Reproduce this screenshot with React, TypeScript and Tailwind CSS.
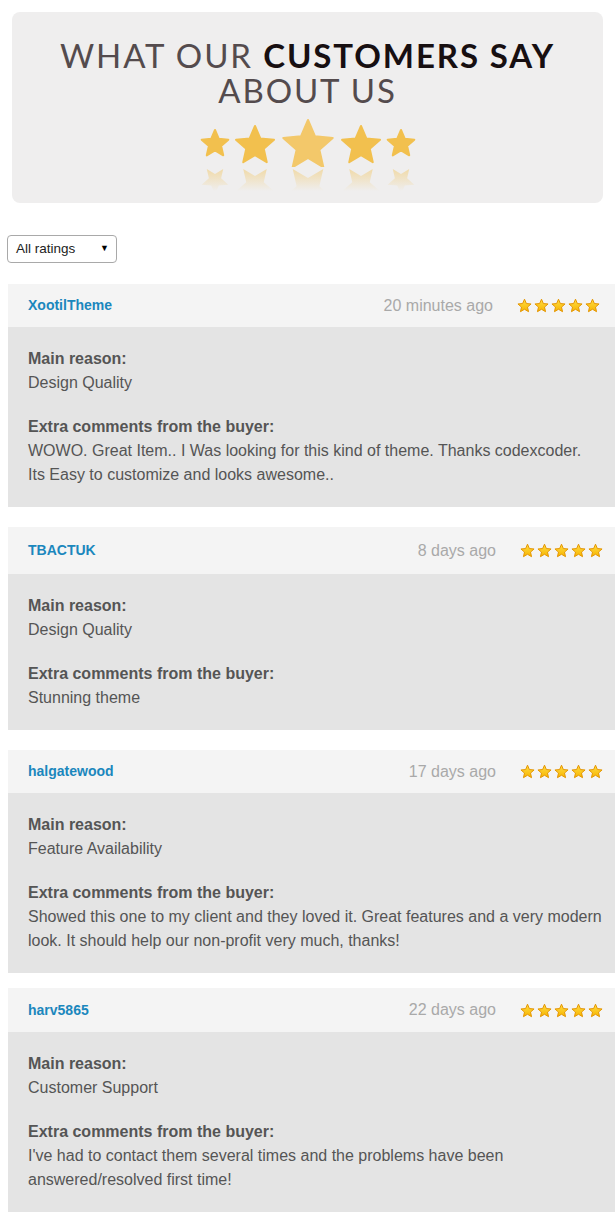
import React from "react";

type Review = {
  name: string;
  time: string;
  reason: string;
  comment: string[];
  head: string;
  top: string;
  right: string;
};

const reviews: Review[] = [
  {
    name: "XootilTheme",
    time: "20 minutes ago",
    reason: "Design Quality",
    comment: [
      "WOWO. Great Item.. I Was looking for this kind of theme. Thanks codexcoder.",
      "Its Easy to customize and looks awesome..",
    ],
    head: "h-[43px]",
    top: "mt-[21px]",
    right: "pr-[15px]",
  },
  {
    name: "TBACTUK",
    time: "8 days ago",
    reason: "Design Quality",
    comment: ["Stunning theme"],
    head: "h-[47px]",
    top: "mt-[20px]",
    right: "pr-[12px]",
  },
  {
    name: "halgatewood",
    time: "17 days ago",
    reason: "Feature Availability",
    comment: [
      "Showed this one to my client and they loved it. Great features and a very modern",
      "look. It should help our non-profit very much, thanks!",
    ],
    head: "h-[43px]",
    top: "mt-[20px]",
    right: "pr-[12px]",
  },
  {
    name: "harv5865",
    time: "22 days ago",
    reason: "Customer Support",
    comment: [
      "I've had to contact them several times and the problems have been",
      "answered/resolved first time!",
    ],
    head: "h-[44px]",
    top: "mt-[15px]",
    right: "pr-[12px]",
  },
];

// 5-point star as a polygon point list
function starPoints(cx: number, cy: number, R: number, flip = false) {
  const r = R * 0.46;
  const pts: string[] = [];
  for (let i = 0; i < 10; i++) {
    const a = ((flip ? 90 : -90) + i * 36) * (Math.PI / 180);
    const rad = i % 2 === 0 ? R : r;
    pts.push(`${(cx + rad * Math.cos(a)).toFixed(2)},${(cy + rad * Math.sin(a)).toFixed(2)}`);
  }
  return pts.join(" ");
}

const bigStars = [
  { x: 27, y: 29, R: 14, c: "#f2c04e" },
  { x: 67, y: 31, R: 20, c: "#f2c04e" },
  { x: 120, y: 31, R: 26, c: "#f3c86a" },
  { x: 173, y: 31, R: 20, c: "#f2c04e" },
  { x: 213, y: 29, R: 14, c: "#f2c04e" },
];

function BannerStars() {
  return (
    <svg width="240" height="80" viewBox="0 0 240 80" className="mx-auto mt-[7px]">
      <defs>
        <linearGradient id="refl" x1="0" y1="53" x2="0" y2="76" gradientUnits="userSpaceOnUse">
          <stop offset="0" stopColor="#f2c04e" stopOpacity="0.45" />
          <stop offset="1" stopColor="#f2c04e" stopOpacity="0" />
        </linearGradient>
      </defs>
      {bigStars.map((s, i) => (
        <g key={i}>
          <polygon
            points={starPoints(s.x, 53 + s.R * 0.809 + 1, s.R, true)}
            fill="url(#refl)"
          />
          <polygon
            points={starPoints(s.x, s.y, s.R)}
            fill={s.c}
            stroke={s.c}
            strokeWidth="2"
            strokeLinejoin="round"
          />
        </g>
      ))}
      <rect x="0" y="52" width="240" height="1.5" fill="#efeeee" />
    </svg>
  );
}

function SmallStar() {
  return (
    <svg width="15" height="15" viewBox="0 0 20 20">
      <defs>
        <linearGradient id="sm" x1="0" y1="0" x2="0" y2="1">
          <stop offset="0" stopColor="#ffdd44" />
          <stop offset="1" stopColor="#f7b500" />
        </linearGradient>
      </defs>
      <polygon
        points={starPoints(10, 10.8, 9.2)}
        fill="url(#sm)"
        stroke="#e39400"
        strokeWidth="1.3"
        strokeLinejoin="round"
      />
    </svg>
  );
}

function ReviewCard({ r }: { r: Review }) {
  return (
    <div className={`${r.top} ml-[8px]`}>
      <div className={`${r.head} ${r.right} flex items-center bg-[#f4f4f4] pl-[20px]`}>
        <span className="text-[14px] font-bold text-[#1b87bd]">{r.name}</span>
        <span className="ml-auto text-[16px] text-[#a9a9a9]">{r.time}</span>
        <div className="ml-[24px] flex gap-[2px]">
          {[0, 1, 2, 3, 4].map((i) => (
            <SmallStar key={i} />
          ))}
        </div>
      </div>
      <div className="bg-[#e4e4e4] pl-[20px] pr-[6px] pt-[20px] pb-[20px] text-[16px] leading-[24px] text-[#555]">
        <div className="font-bold">Main reason:</div>
        <div>{r.reason}</div>
        <div className="mt-[20px] font-bold">Extra comments from the buyer:</div>
        {r.comment.map((line, i) => (
          <div key={i} className="whitespace-nowrap">
            {line}
          </div>
        ))}
      </div>
    </div>
  );
}

export default function App() {
  return (
    <main className="w-[615px] min-h-[1229px] overflow-hidden bg-white pt-[12px] font-['Liberation_Sans',Arial,sans-serif]">
      {/* Banner */}
      <section className="mx-[12px] h-[191px] rounded-[8px] bg-[#efeeee] pt-[26px]">
        <h1 className="text-center font-['Lato',sans-serif] text-[33px] leading-[35px] tracking-[1.9px] text-[#544b4d]">
          WHAT OUR <span className="font-bold text-[#170f11]">CUSTOMERS SAY</span>
          <br />
          ABOUT US
        </h1>
        <BannerStars />
      </section>

      {/* Filter */}
      <div className="ml-[7px] mt-[32px] flex h-[28px] w-[110px] items-center justify-between rounded-[4px] border border-[#a9a9a9] bg-white pl-[8px] pr-[7px] text-[13.5px] text-[#222]">
        <span>All ratings</span>
        <span className="text-[9px] text-black">▼</span>
      </div>

      {reviews.map((r) => (
        <ReviewCard key={r.name} r={r} />
      ))}
    </main>
  );
}
